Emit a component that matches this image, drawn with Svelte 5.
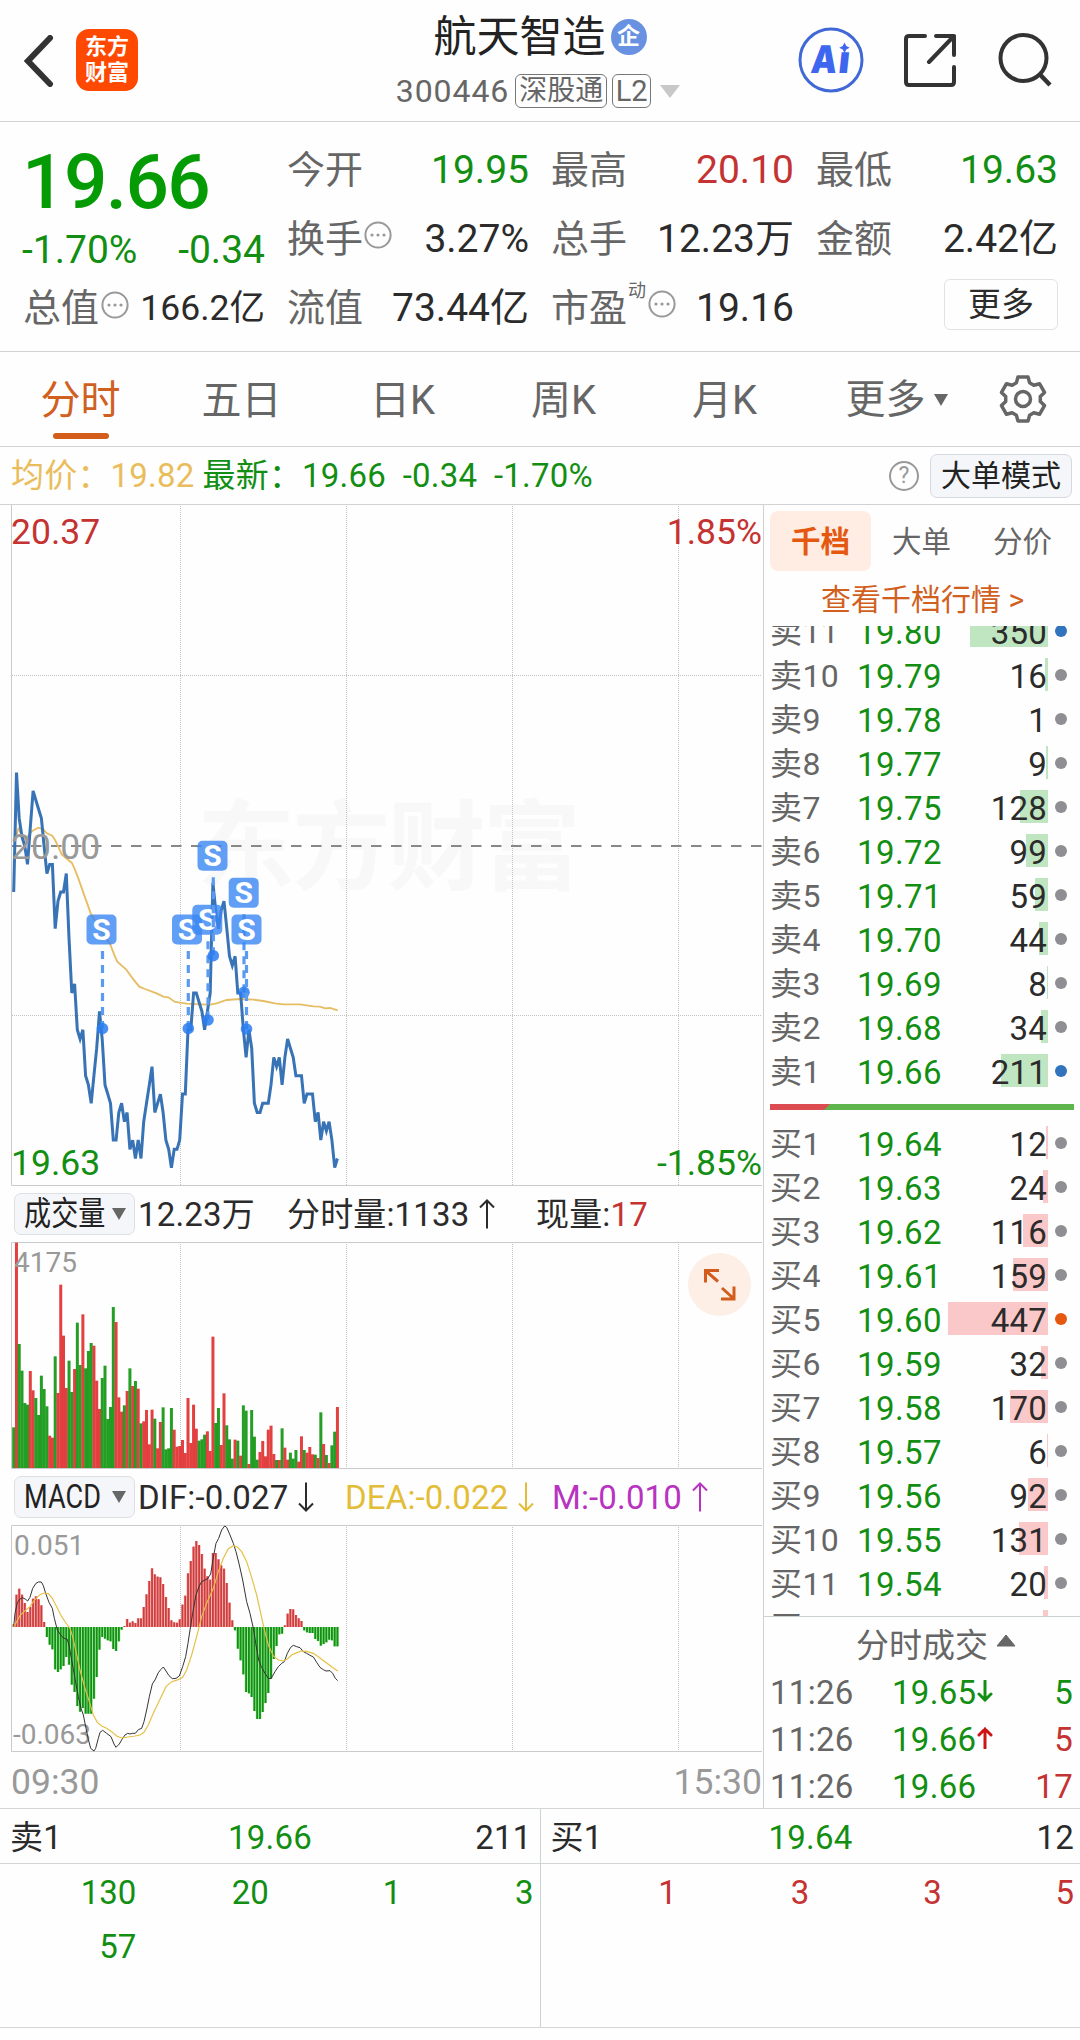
<!--
  StockDetail: intraday quote page of a single stock.

  Header, quote summary, period tabs, price / volume / MACD charts,
  the order book with recent trades and the level-1 queue at the bottom.
-->
<script lang="ts">
	const quotes = [
		[
			{ label: '今开', value: '19.95', tone: 'down' },
			{ label: '换手', value: '3.27%', tip: true },
			{ label: '流值', value: '73.44亿' },
		],
		[
			{ label: '最高', value: '20.10', tone: 'up' },
			{ label: '总手', value: '12.23万' },
			{ label: '市盈', sup: '动', value: '19.16', tip: true },
		],
		[
			{ label: '最低', value: '19.63', tone: 'down' },
			{ label: '金额', value: '2.42亿' },
		],
	];

	const tabs = ['分时', '五日', '日K', '周K', '月K'];

	// [name, price, volume]
	const sells: [string, string, number][] = [
		['卖11', '19.80', 350], ['卖10', '19.79', 16], ['卖9', '19.78', 1], ['卖8', '19.77', 9],
		['卖7', '19.75', 128], ['卖6', '19.72', 99], ['卖5', '19.71', 59], ['卖4', '19.70', 44],
		['卖3', '19.69', 8], ['卖2', '19.68', 34], ['卖1', '19.66', 211],
	];
	const buys: [string, string, number][] = [
		['买1', '19.64', 12], ['买2', '19.63', 24], ['买3', '19.62', 116], ['买4', '19.61', 159],
		['买5', '19.60', 447], ['买6', '19.59', 32], ['买7', '19.58', 170], ['买8', '19.57', 6],
		['买9', '19.56', 92], ['买10', '19.55', 131], ['买11', '19.54', 20], ['买12', '19.53', 24],
	];
	const maxVolume = 447;
	const barWidth = (v: number) => Math.floor((v / maxVolume) * 100);
	const dotTone = (v: number) => (v > 400 ? 'hot' : v > 200 ? 'blue' : '');

	const trades = [
		{ time: '11:26', price: '19.65', dir: 'down', volume: 5, tone: 'down' },
		{ time: '11:26', price: '19.66', dir: 'up', volume: 5, tone: 'up' },
		{ time: '11:26', price: '19.66', dir: '', volume: 17, tone: 'up' },
	];

	const queues = [
		{ name: '卖1', price: '19.66', total: 211, tone: 'down', orders: [130, 20, 1, 3, 57] },
		{ name: '买1', price: '19.64', total: 12, tone: 'up', orders: [1, 3, 3, 5] },
	];

	// one entry per minute, in cents away from yesterday's close (20.00)
	const prices = [
		-5, 8, 3, 1, 0, -2, 2, 6, 5, 4, 3, 0, -3, -2, -2, -9, -6, -5, -5, -3,
		-10, -16, -15, -20, -21, -20, -25, -26, -28, -25, -22, -18, -21, -26, -27, -28, -32, -32, -29, -28,
		-30, -29, -33, -32, -34, -32, -34, -30, -28, -26, -24, -29, -28, -27, -29, -32, -33, -35, -33, -33,
		-32, -27, -27, -20, -20, -16, -16, -17, -18, -20, -18, -16, -4, -7, -9, -7, -6, -9, -12, -13,
		-12, -16, -16, -20, -23, -20, -22, -28, -29, -29, -28, -28, -28, -26, -23, -24, -23, -26, -23, -21,
		-22, -23, -25, -25, -25, -28, -27, -27, -27, -30, -29, -32, -30, -31, -30, -32, -35, -34,
	];

	// bar heights, negative = falling minute
	const volumes = [
		-122, 676, -372, -292, -195, -190, 291, 233, -210, -159, -277, -237, -185, 97, 91, -335, 225, 550, 397, 240,
		-322, -228, 297, -436, -309, 461, -299, -351, -375, 367, 262, 177, -270, -307, -147, -183, -483, 438, 212, 169,
		-188, 231, -299, 246, -261, 238, -134, 140, 174, 71, 175, -148, 59, 138, -182, -56, -59, -180, 115, 64,
		66, 84, 45, 210, 75, 190, 118, -82, -86, -100, 110, 51, 394, -135, -180, 69, 224, -128, -86, -28,
		85, -82, 37, -188, -172, 12, -174, -94, -25, 48, 81, 35, 115, 127, 42, -24, 24, -119, 61, 25,
		-46, -28, -54, 19, 95, -54, 46, 63, 41, -40, 30, -167, 72, -39, 15, -68, -109, 183,
	];

	const macd = [
		8, 97, 115, 97, 72, 45, 60, 85, 92, 83, 65, 15, -30, -53, -67, -127, -135, -127, -117, -90,
		-113, -173, -195, -237, -254, -243, -260, -260, -260, -215, -150, -68, -30, -35, -40, -43, -66, -72, -43, -8,
		3, 24, 13, 17, 12, 26, 26, 60, 98, 138, 176, 158, 151, 149, 129, 90, 57, 20, 14, 13,
		23, 67, 94, 161, 198, 241, 258, 246, 219, 175, 152, 142, 222, 222, 203, 185, 175, 132, 73, 20,
		-10, -65, -100, -142, -195, -199, -210, -252, -276, -276, -255, -228, -198, -155, -96, -57, -22, -20, 5, 40,
		54, 53, 36, 26, 18, -10, -16, -18, -18, -36, -42, -56, -51, -46, -38, -40, -58, -58,
	];

	const avgLine = '45,300 55,266 64,280 76,298 90,280 98,272 115,263 130,268 140,280 157,287 165,300 175,320 185,343 195,352 205,360 215,368 222,382 235,415 250,458 265,500 272,520 300,570 330,612 345,650 352,665 378,688 400,718 418,740 435,747 470,760 490,770 505,772 525,786 560,791 600,793 630,794 650,790 680,780 720,777 760,779 790,783 825,790 850,793 900,793 940,799 960,800 975,805 990,804 1013,811';
	const difLine = '41,471 45,430 52,398 60,387 68,383 77,388 83,393 90,382 98,355 108,340 115,336 124,336 130,347 137,370 147,397 157,415 163,445 172,480 180,492 190,504 202,508 208,530 215,570 225,625 235,680 243,715 250,735 258,775 265,808 272,835 282,843 287,835 295,805 300,787 308,781 320,790 333,800 342,822 348,832 358,822 366,808 375,795 383,790 390,792 398,790 406,790 415,779 425,775 432,755 440,720 448,680 457,642 465,630 475,608 483,598 490,591 498,603 507,617 517,626 528,625 538,618 548,590 557,560 564,520 570,480 578,430 588,375 597,350 605,335 615,330 623,326 632,312 640,262 648,220 656,205 665,180 674,168 680,172 690,195 700,220 708,245 718,285 728,330 740,395 750,430 760,475 768,525 776,570 784,590 795,610 805,625 813,626 825,605 835,590 845,580 853,575 862,550 872,532 880,526 890,530 900,533 910,545 920,550 930,556 940,561 950,577 960,592 970,599 978,603 990,602 998,610 1006,625 1013,632';
	const deaLine = '41,471 50,455 60,437 75,422 90,410 105,388 120,374 132,369 145,371 157,385 170,410 185,440 200,462 210,475 218,500 228,545 240,600 255,655 268,695 280,735 292,757 305,768 320,775 335,785 350,798 365,804 385,801 405,798 420,795 432,787 445,765 460,730 480,688 498,650 515,635 535,629 548,622 560,600 575,555 590,500 605,440 620,400 640,355 655,305 670,265 685,236 700,227 712,231 725,245 740,275 755,322 770,375 780,420 792,475 805,525 820,558 835,570 850,573 862,567 875,555 890,548 905,543 920,544 940,550 955,560 975,575 995,590 1013,603';

	// badge centre x/y and the dot it points at
	const signals = [
		{ x: 101.5, y: 929.5, dx: 102.5, dy: 1028.5 },
		{ x: 187, y: 929.5, dx: 188.3, dy: 1028.5 },
		{ x: 207.3, y: 919.7, dx: 208, dy: 1020 },
		{ x: 212.5, y: 855.7, dx: 213.3, dy: 955.7 },
		{ x: 243.7, y: 892.7, dx: 244, dy: 992.3 },
		{ x: 246.5, y: 929.5, dx: 246.5, dy: 1029 },
	];

	const gridX = [180.5, 346.5, 512.5, 678.5];
	const minuteX = (i: number) => 13.7 + i * 2.767;
	const pricePoints = prices.map((c, i) => `${minuteX(i).toFixed(1)},${(846 - c * 9.19).toFixed(1)}`).join(' ');

	function gearPoints(r1: number, r2: number) {
		const pts: string[] = [];
		for (let k = 0; k < 6; k++) {
			for (const [a, r] of [[-22, r2], [-13, r1], [13, r1], [22, r2]]) {
				const t = ((k * 60 + a) * Math.PI) / 180;
				pts.push(`${(25 + r * Math.sin(t)).toFixed(1)},${(25 - r * Math.cos(t)).toFixed(1)}`);
			}
		}
		return pts.join(' ');
	}
</script>

{#snippet tip()}
	<svg class="tip" width="28" height="28" viewBox="0 0 28 28">
		<circle cx="14" cy="14" r="12.6" fill="none" stroke="#999" stroke-width="2" />
		<circle cx="8" cy="14" r="1.6" fill="#999" />
		<circle cx="14" cy="14" r="1.6" fill="#999" />
		<circle cx="20" cy="14" r="1.6" fill="#999" />
	</svg>
{/snippet}

{#snippet arrow(dir)}
	<svg class="arrow" class:flip={dir === 'down'} width="16" height="30" viewBox="0 0 16 30">
		<path d="M8 29.500V1.500M1 8.500L8 1.500L15 8.500" fill="none" stroke="currentColor" stroke-width="2" />
	</svg>
{/snippet}

{#snippet level(row, side)}
	<div class="level">
		<span class="level-name">{row[0]}</span>
		<span class="level-price down">{row[1]}</span>
		<span class="level-volume">
			<i class="bar {side}" style="width:{barWidth(row[2])}px"></i>
			<b>{row[2]}</b>
		</span>
		<i class="dot {dotTone(row[2])}"></i>
	</div>
{/snippet}

<div class="page">
	<header>
		<div class="head-left">
			<svg width="30" height="52" viewBox="0 0 30 52">
				<path d="M26 3L4 26L26 49" fill="none" stroke="#333" stroke-width="6" stroke-linecap="round" />
			</svg>
			<div class="logo"><span>东方</span><span>财富</span></div>
		</div>
		<div class="head-title">
			<div class="name">航天智造<span class="corp">企</span></div>
			<div class="code">
				<span class="digits">300446</span>
				<span class="tag">深股通</span>
				<span class="tag l2">L2</span>
				<svg width="20" height="13" viewBox="0 0 20 13"><path d="M0 0H20L10 13Z" fill="#c8c8c8" /></svg>
			</div>
		</div>
		<div class="head-right">
			<svg width="66" height="66" viewBox="0 0 66 66">
				<circle cx="33" cy="33" r="31" fill="none" stroke="#4169d6" stroke-width="3" />
				<g transform="translate(0 46) skewX(-6)">
					<text class="ai" x="12" textLength="26" lengthAdjust="spacingAndGlyphs">A</text>
					<text class="ai" x="39.500">ı</text>
				</g>
				<path d="M46.500 15.500L48.300 18.900L51.700 20.700L48.300 22.500L46.500 25.900L44.700 22.500L41.300 20.700L44.700 18.900Z" fill="#3f66ee" />
			</svg>
			<svg width="52" height="54" viewBox="0 0 52 54">
				<path d="M21 3H5Q2 3 2 6V49Q2 52 5 52H47Q50 52 50 49V34M32 3H50V22M50 3L25 29" fill="none" stroke="#333" stroke-width="4" stroke-linecap="round" stroke-linejoin="round" />
			</svg>
			<svg width="54" height="54" viewBox="0 0 54 54">
				<circle cx="25.500" cy="25" r="23" fill="none" stroke="#333" stroke-width="4" />
				<path d="M41.500 41L52 52" stroke="#333" stroke-width="4.500" />
			</svg>
		</div>
	</header>

	<section class="quote">
		<div class="quote-main">
			<div class="last down">19.66</div>
			<div class="change down"><span>-1.70%</span><span>-0.34</span></div>
			<div class="cap"><span class="label">总值</span>{@render tip()}<span class="cap-value">166.2亿</span></div>
		</div>
		{#each quotes as col, c}
			<div class="quote-col">
				{#each col as item}
					<div class="quote-item">
						<span class="label">{item.label}</span>
						{#if item.sup}<sup>{item.sup}</sup>{/if}
						{#if item.tip}{@render tip()}{/if}
						<span class="value {item.tone ?? ''}">{item.value}</span>
					</div>
				{/each}
				{#if c === 2}<button class="more">更多</button>{/if}
			</div>
		{/each}
	</section>

	<nav>
		{#each tabs as tab, i}
			<span class="tab" class:active={i === 0}>{tab}</span>
		{/each}
		<span class="tab tab-more">更多<svg width="14" height="12" viewBox="0 0 14 12"><path d="M0 0H14L7 12Z" fill="#666" /></svg></span>
		<span class="gear">
			<svg width="50" height="50" viewBox="0 0 50 50">
				<polygon points={gearPoints(22.5, 17.5)} fill="none" stroke="#666" stroke-width="3.500" stroke-linejoin="round" />
				<circle cx="25" cy="25" r="7.500" fill="none" stroke="#666" stroke-width="3.500" />
			</svg>
		</span>
	</nav>

	<div class="legend">
		<span class="avg">均价：19.82</span>
		<span class="down">最新：19.66&nbsp; -0.34&nbsp; -1.70%</span>
		<span class="help">?</span>
		<button class="mode">大单模式</button>
	</div>

	<main>
		<div class="charts">
			<svg width="763" height="681" viewBox="0 505 763 681">
				<text class="watermark" x="197" y="882" textLength="384">东方财富</text>
				{#each gridX as x}
					<line class="grid" x1={x} x2={x} y1="506" y2="1185" />
				{/each}
				<line class="grid" x1="12" x2="762" y1="675.5" y2="675.5" />
				<line class="grid" x1="12" x2="762" y1="1015.5" y2="1015.5" />
				<line x1="11" x2="762" y1="846" y2="846" stroke="#888" stroke-width="2" stroke-dasharray="10.5 9.500" />
				<path d="M11.500 505V1185.500H762" class="frame" />
				<polyline points={avgLine} transform="translate(0 740) scale(.33333)" fill="none" stroke="#e6bd63" stroke-width="5.500" />
				<polyline points={pricePoints} fill="none" stroke="#3773b5" stroke-width="3" stroke-linejoin="miter" />
				<text class="axis mute" x="11" y="859">20.00</text>
				<text class="axis up" x="11" y="544">20.37</text>
				<text class="axis up" x="762" y="544" text-anchor="end">1.85%</text>
				<text class="axis down" x="11" y="1175">19.63</text>
				<text class="axis down" x="762" y="1175" text-anchor="end">-1.85%</text>
				{#each signals as s}
					<line x1={s.dx} x2={s.dx} y1={s.y + 21.5} y2={s.dy} stroke="#5a9af0" stroke-width="3.200" stroke-dasharray="8 6" />
					<circle cx={s.dx} cy={s.dy} r="5.800" fill="#2a7cf0" fill-opacity="0.85" />
					<rect x={s.x - 15} y={s.y - 15} width="30" height="30" rx="5" fill="#3a86f2" fill-opacity="0.8" />
					<text class="signal" x={s.x} y={s.y + 10.5} text-anchor="middle">S</text>
				{/each}
			</svg>

			<div class="indicator">
				<span class="chip"><span class="chip-text">成交量</span><svg width="14" height="12" viewBox="0 0 14 12"><path d="M0 0H14L7 12Z" fill="#666" /></svg></span>
				<span class="ind-value">12.23万</span>
				<span class="ind-minute">分时量:1133{@render arrow('up')}</span>
				<span>现量:<b class="up">17</b></span>
			</div>
			<svg width="763" height="227" viewBox="0 1242 763 227">
				{#each gridX as x}
					<line class="grid" x1={x} x2={x} y1="1244" y2="1468" />
				{/each}
				<path d="M762 1242.500H11.500V1468.500H762" class="frame" />
				{#each volumes as v, i}
					<rect x={minuteX(i) - 1.5} y={1468 - Math.abs(v) / 3} width="3" height={Math.abs(v) / 3} fill={v < 0 ? '#0c940c' : '#e02c2c'} fill-opacity="0.9" />
				{/each}
				<text class="scale" x="14" y="1272">4175</text>
				<circle cx="719.500" cy="1284.500" r="31.500" fill="#fdeee6" />
				<path d="M719 1270.500H705.500V1282.500M706 1271L718 1281.500M721 1299H734V1286.500M733.500 1298.500L722 1288" fill="none" stroke="#d15c1c" stroke-width="3" />
			</svg>

			<div class="indicator">
				<span class="chip"><span class="chip-text">MACD</span><svg width="14" height="12" viewBox="0 0 14 12"><path d="M0 0H14L7 12Z" fill="#666" /></svg></span>
				<span class="ind-dif">DIF:-0.027{@render arrow('down')}</span>
				<span class="ind-dea">DEA:-0.022{@render arrow('down')}</span>
				<span class="ind-m">M:-0.010{@render arrow('up')}</span>
			</div>
			<svg width="763" height="227" viewBox="0 1525 763 227">
				{#each gridX as x}
					<line class="grid" x1={x} x2={x} y1="1527" y2="1751" />
				{/each}
				<path d="M762 1525.500H11.500V1751.500H762" class="frame" />
				<text class="scale" x="14" y="1555">0.051</text>
				<text class="scale" x="13" y="1743.500">-0.063</text>
				{#each macd as v, i}
					<rect x={minuteX(i) - 1.4} y={v > 0 ? 1627 - v / 3 : 1627} width="2.8" height={Math.abs(v) / 3} fill={v > 0 ? '#f9a0a0' : '#7fe07f'} />
					<rect x={minuteX(i) - 0.9} y={v > 0 ? 1627 - v / 3 : 1627} width="1.8" height={Math.abs(v) / 3} fill={v > 0 ? '#cc3f3f' : '#148f14'} />
				{/each}
				<polyline points={difLine} transform="translate(0 1470) scale(.33333)" fill="none" stroke="#333" stroke-width="3" />
				<polyline points={deaLine} transform="translate(0 1470) scale(.33333)" fill="none" stroke="#e5c044" stroke-width="3.500" />
			</svg>
			<div class="hours"><span>09:30</span><span>15:30</span></div>
		</div>

		<aside>
			<div class="book-tabs">
				<span class="on">千档</span><span>大单</span><span>分价</span>
			</div>
			<div class="book-link">查看千档行情 <em>&gt;</em></div>
			<div class="book">
				<div class="levels">
					{#each sells as row}{@render level(row, 'sell')}{/each}
					<svg class="ratio" width="304" height="6" viewBox="0 0 304 6">
						<rect width="304" height="6" fill="#5fb54d" />
						<path d="M0 0H60L54 6H0Z" fill="#dc4b50" />
					</svg>
					{#each buys as row}{@render level(row, 'buy')}{/each}
				</div>
			</div>
			<div class="trades">
				<div class="trades-head">分时成交<svg width="20" height="13" viewBox="0 0 20 13"><path d="M10 1L19 12H1Z" fill="#666" stroke="#666" stroke-linejoin="round" /></svg></div>
				{#each trades as t}
					<div class="trade">
						<span class="time">{t.time}</span>
						<span class="trade-price down">{t.price}</span>
						<span class="trade-dir">
							{#if t.dir}
								<svg class={t.dir} class:flip={t.dir === 'down'} width="16" height="22" viewBox="0 0 16 22">
									<path d="M8 21V2M2 8L8 2L14 8" fill="none" stroke="currentColor" stroke-width="3" stroke-linecap="round" />
								</svg>
							{/if}
						</span>
						<span class="trade-volume {t.tone}">{t.volume}</span>
					</div>
				{/each}
			</div>
		</aside>
	</main>

	<footer>
		{#each queues as q}
			<div class="queue">
				<div class="queue-head">
					<span>{q.name}</span><span class="down">{q.price}</span><span class="total">{q.total}</span>
				</div>
				<div class="orders {q.tone}">
					{#each q.orders as n}<span>{n}</span>{/each}
				</div>
			</div>
		{/each}
	</footer>
</div>

<style>
	:global(body) { margin: 0; background: #fff; }
	.page {
		width: 1080px;
		height: 2040px;
		overflow: hidden;
		background: #fefefe;
		color: #2b2b2b;
		font-family: Roboto, "Noto Sans CJK SC", sans-serif;
		font-size: 33px;
	}
	.page svg { display: block; flex: none; }
	.up { color: #c43232; }
	.down { color: #128f12; }
	button {
		font-family: inherit;
		padding: 0;
		box-sizing: border-box;
	}
	b, i, em { font-weight: 400; font-style: normal; }

	header {
		display: grid;
		grid-template-columns: 300px 1fr 300px;
		height: 121px;
		border-bottom: 1px solid #d2d2d2;
	}
	.head-left { display: flex; align-items: center; gap: 22px; padding-left: 24px; }
	.logo {
		width: 62px;
		height: 62px;
		margin-top: -2px;
		border-radius: 13px;
		background: #ff4800;
		color: #fff;
		font-size: 22px;
		font-weight: 700;
		line-height: 26px;
		display: flex;
		flex-direction: column;
		align-items: center;
		justify-content: center;
	}
	.head-title { display: flex; flex-direction: column; align-items: center; }
	.name {
		display: flex;
		align-items: center;
		font-size: 43px;
		line-height: 50px;
		margin-top: 12px;
		color: #222;
	}
	.corp {
		width: 36px;
		height: 36px;
		border-radius: 50%;
		margin-left: 5px;
		background: #6991e2;
		color: #fff;
		font-size: 23px;
		font-weight: 700;
		line-height: 35px;
		text-align: center;
	}
	.code { display: flex; align-items: center; margin: 12px 4px 0 0; color: #666; font-size: 32px; line-height: 34px; }
	.digits { letter-spacing: 0.9px; margin-right: 6px; }
	.tag {
		box-sizing: border-box;
		width: 92px;
		height: 34px;
		margin-right: 5px;
		border: 1.5px solid #777;
		border-radius: 6px;
		font-size: 28px;
		line-height: 32px;
		text-align: center;
	}
	.tag.l2 { width: 39px; margin-right: 9px; font-size: 29px; }
	.head-right { display: flex; align-items: center; padding-left: 18px; }
	.head-right svg { margin-top: -2px; }
	.head-right svg:nth-child(2) { margin-left: 40px; }
	.head-right svg:nth-child(3) { margin-left: 42px; }
	.ai { font: 900 38px Inter, sans-serif; fill: #3f66ee; }

	.quote {
		display: grid;
		grid-template-columns: 240px 242px 243px 242px;
		column-gap: 22px;
		height: 229px;
		padding-left: 25px;
		border-bottom: 1px solid #d2d2d2;
		font-size: 39px;
	}
	.quote-main { margin-left: -2px; }
	.label { color: #666; font-size: 38px; }
	.last {
		margin: 20px 0 0 -1px;
		font-size: 76.5px;
		font-weight: 500;
		line-height: 80px;
		letter-spacing: -1.6px;
		color: #059b05;
	}
	.change { display: flex; justify-content: space-between; line-height: 56px; margin-left: -1px; }
	.cap { display: flex; align-items: center; line-height: 61px; }
	.cap .tip { margin: -8px 0 0 2px; }
	.cap-value { margin-left: auto; font-size: 35.5px; }
	.quote-col { padding-top: 14px; }
	.quote-item { display: flex; align-items: center; height: 69px; line-height: 69px; }
	.quote-item .tip { margin: -9px 0 0 1px; }
	sup { align-self: flex-start; font-size: 18px; line-height: 34px; margin: 0 0 0 1px; color: #666; width: 19px; }
	.value { margin-left: auto; }
	.more {
		display: block;
		width: 114px;
		height: 51px;
		margin: 5px 0 0 128px;
		border: 1.5px solid #dfe3e5;
		border-radius: 6px;
		background: #fefefe;
		color: #2b2b2b;
		font-size: 33px;
		line-height: 47px;
	}

	nav { display: flex; height: 94px; border-bottom: 1px solid #d2d2d2; }
	.tab {
		width: 161px;
		height: 94px;
		display: flex;
		flex-direction: column;
		align-items: center;
		color: #666;
		font-size: 40px;
		line-height: 98px;
	}
	.tab.active { color: #d0601f; }
	.tab.active::after { content: ''; width: 56px; height: 6px; margin-top: -17px; border-radius: 3px; background: #d45d1c; }
	.tab-more { flex-direction: row; justify-content: center; gap: 8px; box-sizing: border-box; padding: 2px 0 0 22px; }
	.gear { flex: 1; display: flex; align-items: center; justify-content: center; }

	.legend {
		display: flex;
		align-items: center;
		height: 57px;
		line-height: 58px;
		padding: 0 8px 0 11px;
		border-bottom: 1px solid #d2d2d2;
		letter-spacing: 0.2px;
	}
	.avg { color: #e9bd5c; margin-right: 8px; }
	.help {
		box-sizing: border-box;
		width: 30px;
		height: 30px;
		margin: 0 11px 0 auto;
		border: 2.5px solid #999;
		border-radius: 50%;
		color: #999;
		font-size: 23px;
		line-height: 26px;
		text-align: center;
	}
	.mode {
		width: 142px;
		height: 44px;
		border: 1.5px solid #d6dade;
		border-radius: 7px;
		background: #f5f6f9;
		color: #222;
		font-size: 30px;
		line-height: 41px;
	}

	main { display: flex; height: 1303px; border-bottom: 1px solid #d2d6d8; }
	.charts { width: 763px; border-right: 1px solid #ccd2d4; }
	.frame { fill: none; stroke: #c8cacb; stroke-width: 1; }
	.grid { stroke: #c4c4c4; stroke-width: 1; stroke-dasharray: 1 1; shape-rendering: crispEdges; }
	.watermark { font: 700 98px "Noto Sans CJK SC", sans-serif; fill: #f8f8f8; }
	.axis { font-size: 35.5px; fill: currentColor; }
	.mute { color: #999; }
	.scale { font-size: 28px; fill: #999; }
	.signal { font-size: 30px; font-weight: 700; fill: #fff; }
	.indicator {
		display: flex;
		align-items: center;
		height: 56px;
		line-height: 57px;
		padding-left: 14px;
		letter-spacing: 0.15px;
	}
	.chip {
		display: flex;
		align-items: center;
		box-sizing: border-box;
		width: 121px;
		height: 42px;
		padding-left: 9px;
		border: 1px solid #dde0e3;
		border-radius: 7px;
		background: #f5f6f9;
		color: #222;
		line-height: 40px;
	}
	.chip-text { width: 88px; font-size: 33px; white-space: nowrap; transform: scaleX(0.82); transform-origin: left; }
	.arrow { margin-left: 10px; }
	.flip { transform: rotate(180deg); }
	.ind-value { width: 149px; margin-left: 3px; }
	.ind-minute, .ind-dif, .ind-dea, .ind-m { display: flex; align-items: center; }
	.ind-minute { width: 249px; }
	.ind-dif { margin-left: 3px; width: 207px; }
	.ind-dea { width: 207px; color: #e3bd38; }
	.ind-m { color: #b833c0; }
	.hours { display: flex; justify-content: space-between; padding: 0 1px 0 11px; color: #999; font-size: 35.5px; line-height: 60px; }

	aside { flex: 1; min-width: 0; padding-top: 6px; }
	.book-tabs { display: flex; height: 60px; margin-left: 6px; color: #666; font-size: 29.5px; line-height: 62px; }
	.book-tabs span { width: 101px; text-align: center; }
	.book-tabs .on { border-radius: 8px; background: #ffece3; color: #e4580f; font-weight: 700; }
	.book-link { height: 55px; padding-left: 57px; color: #d1601f; font-size: 30px; line-height: 58px; white-space: nowrap; }
	em { font-size: 30px; }
	.book { display: flow-root; height: 990px; overflow: hidden; border-bottom: 1px solid #ccd2d4; }
	.levels { margin-top: -18px; }
	.level { display: flex; align-items: flex-start; height: 44px; line-height: 49px; padding-left: 6px; }
	.level-name { width: 88px; color: #666; font-size: 32px; letter-spacing: 0.4px; }
	.level-price { letter-spacing: 0.4px; margin-left: -1px; }
	.level-volume {
		position: relative;
		margin-left: auto;
		width: 104px;
		height: 44px;
		text-align: right;
	}
	.level-volume b { position: relative; margin-right: 1px; letter-spacing: 0.2px; }
	.bar { position: absolute; right: 0; top: 6px; height: 33px; }
	.bar.sell { background: #c0e6c1; }
	.bar.buy { background: #fac8c8; }
	.dot { width: 12px; height: 12px; margin: 17px 13px 0 7px; border-radius: 50%; background: #8e8e93; }
	.dot.blue { background: #3173bd; }
	.dot.hot { background: #e4580f; }
	.page .ratio { margin: 12px 0 10px 6px; }
	.trades-head {
		display: flex;
		align-items: center;
		justify-content: center;
		height: 52px;
		gap: 8px;
		padding-left: 28px;
		color: #666;
	}
	.trades-head svg { margin-top: -5px; }
	.trade {
		display: flex;
		align-items: center;
		height: 47px;
		line-height: 47px;
		padding: 0 7px 0 6px;
		letter-spacing: 0.3px;
	}
	.time { width: 122px; color: #666; }
	.trade-dir { margin-left: 1px; }
	.trade-dir svg { margin-top: -3px; }
	.trade-dir .up { color: #cc1414; }
	.trade-volume { margin-left: auto; }

	footer { display: flex; height: 218px; border-bottom: 1px solid #d2d6d8; }
	.queue { flex: 1; }
	.queue:first-child { border-right: 1px solid #ccd2d4; }
	.queue-head {
		display: grid;
		grid-template-columns: 218px 1fr auto;
		padding: 0 6px 0 10px;
		height: 54px;
		line-height: 57px;
		border-bottom: 1px solid #d2d6d8;
		letter-spacing: 0.2px;
	}
	.queue:first-child .queue-head { padding-right: 8px; }
	.orders { display: grid; grid-template-columns: repeat(4, 132.4px); padding-left: 4px; line-height: 54px; padding-top: 2px; text-align: right; }
</style>
